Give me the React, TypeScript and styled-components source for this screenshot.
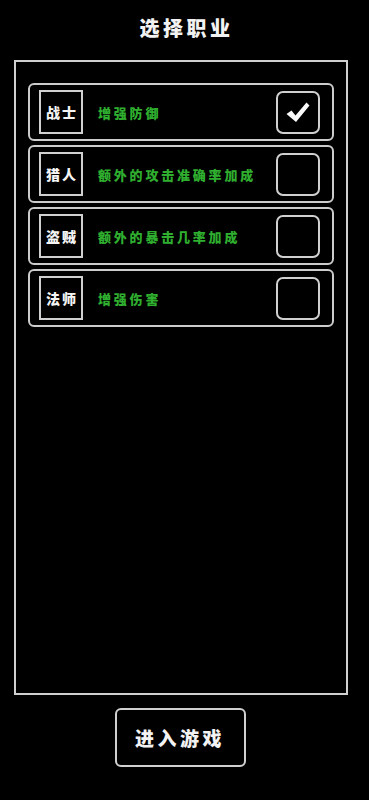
import styled, { createGlobalStyle } from 'styled-components';

const GlobalStyle = createGlobalStyle`
  html, body {
    margin: 0;
    padding: 0;
    background: #000;
  }
  body {
    font-family: "Noto Sans CJK SC", "Noto Sans", sans-serif;
  }
`;

const Page = styled.div`
  width: 369px;
  height: 800px;
  display: flex;
  flex-direction: column;
  background: #000;
  box-sizing: border-box;
`;

const Title = styled.h1`
  margin: 14px 0 0;
  height: 27px;
  line-height: 27px;
  text-align: center;
  color: #f2f2f2;
  font-size: 20px;
  font-weight: 900;
  letter-spacing: 3.5px;
  padding-left: 4px;
`;

const Panel = styled.div`
  margin: 19px 0 0 14px;
  width: 334px;
  height: 635px;
  box-sizing: border-box;
  border: 2px solid #d0d0d0;
  padding: 21px 12.5px 0 12px;
  display: flex;
  flex-direction: column;
  gap: 4px;
`;

const Row = styled.div`
  height: 58px;
  box-sizing: border-box;
  border: 2px solid #cccccc;
  border-radius: 6px;
  display: flex;
  align-items: center;
  padding: 0 12px 0 9px;
`;

const NameBox = styled.div`
  width: 44px;
  height: 44px;
  box-sizing: border-box;
  border: 2px solid #d0d0d0;
  display: flex;
  align-items: center;
  justify-content: center;
  color: #f4f4f4;
  font-size: 14px;
  font-weight: 900;
  letter-spacing: 2px;
  padding-left: 2px;
`;

const Desc = styled.span`
  flex: 1;
  margin-left: 15px;
  color: #2fae2f;
  font-size: 13px;
  font-weight: 900;
  letter-spacing: 2.8px;
`;

const CheckBox = styled.div<{ $checked?: boolean }>`
  width: 44px;
  height: 43px;
  box-sizing: border-box;
  border: 2px solid #d0d0d0;
  border-radius: 7px;
  display: flex;
  align-items: center;
  justify-content: center;
`;

const Footer = styled.div`
  display: flex;
  justify-content: center;
  margin-top: 13px;
  padding-right: 8px;
`;

const StartButton = styled.button`
  width: 131px;
  height: 59px;
  box-sizing: border-box;
  background: #000;
  border: 2px solid #d0d0d0;
  border-radius: 6px;
  color: #f2f2f2;
  font-family: "Noto Sans CJK SC", "Noto Sans", sans-serif;
  font-size: 19px;
  font-weight: 900;
  letter-spacing: 3.5px;
  padding-left: 5px;
`;

const classes = [
  { name: '战士', desc: '增强防御', checked: true },
  { name: '猎人', desc: '额外的攻击准确率加成', checked: false },
  { name: '盗贼', desc: '额外的暴击几率加成', checked: false },
  { name: '法师', desc: '增强伤害', checked: false },
];

function CheckMark() {
  return (
    <svg width="26" height="24" viewBox="0 0 26 24">
      <path
        d="M1.5 14 L6.5 10.5 L10.5 15.5 L21.5 2.5 L24.5 5.5 L11 22 Z"
        fill="#fafafa"
      />
    </svg>
  );
}

export default function App() {
  return (
    <Page>
      <GlobalStyle />
      <Title>选择职业</Title>
      <Panel>
        {classes.map((c) => (
          <Row key={c.name}>
            <NameBox>{c.name}</NameBox>
            <Desc>{c.desc}</Desc>
            <CheckBox $checked={c.checked}>{c.checked && <CheckMark />}</CheckBox>
          </Row>
        ))}
      </Panel>
      <Footer>
        <StartButton>进入游戏</StartButton>
      </Footer>
    </Page>
  );
}
